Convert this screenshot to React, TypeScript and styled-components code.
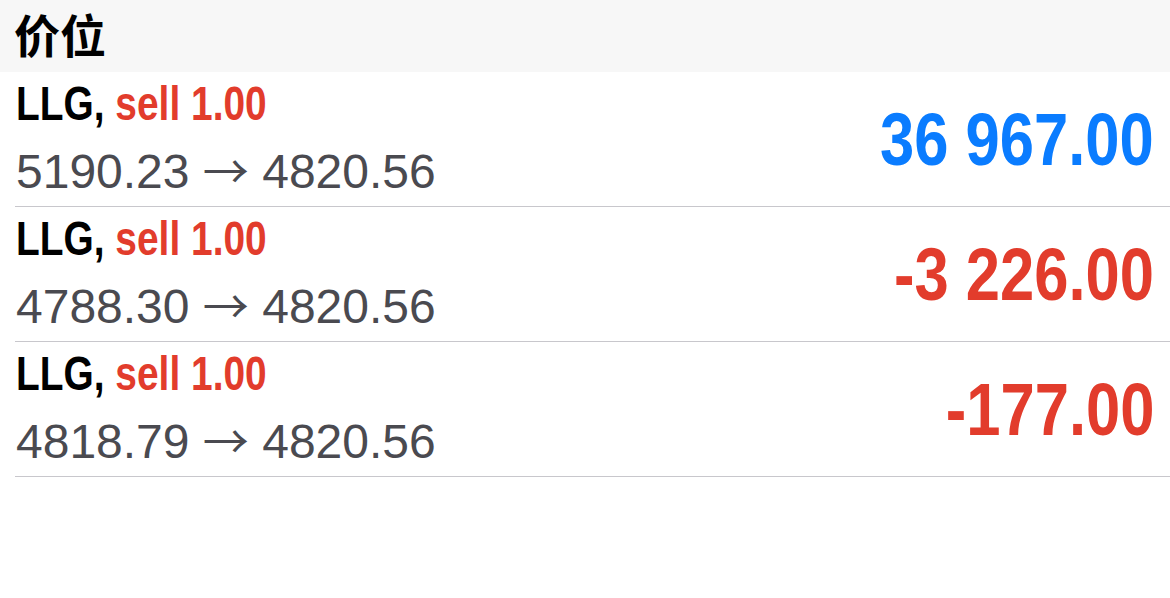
import React from "react";
import styled, { createGlobalStyle } from "styled-components";

const Global = createGlobalStyle`
  html, body { margin: 0; padding: 0; background: #ffffff; }
  body { font-family: "Liberation Sans", Arial, sans-serif; }
`;

const Page = styled.div`
  width: 1170px;
  height: 598px;
  background: #ffffff;
`;

const Header = styled.div`
  height: 72px;
  box-sizing: border-box;
  background: #f7f7f7;
  display: flex;
  align-items: center;
  padding: 0 0 6px 14px;
  font-family: "Noto Sans CJK SC", "Liberation Sans", sans-serif;
  font-weight: 700;
  font-size: 46px;
  line-height: 1;
  color: #000;
`;

const List = styled.div`
  display: flex;
  flex-direction: column;
`;

const Row = styled.div`
  height: 135px;
  box-sizing: border-box;
  display: flex;
  align-items: center;
  justify-content: space-between;
  margin-left: 15px;
  padding-right: 16px;
  border-bottom: 1px solid #c8c7cc;
`;

const Info = styled.div`
  display: flex;
  flex-direction: column;
  padding-top: 2px;
  padding-bottom: 4px;
  margin-left: 1px;
`;

const Title = styled.div`
  font-family: "Liberation Sans", Arial, sans-serif;
  font-weight: 700;
  font-size: 48px;
  line-height: 64px;
  color: #000;
  white-space: nowrap;
  transform: scaleX(0.81);
  transform-origin: left center;
`;

const Side = styled.span`
  color: #e23c2c;
`;

const Prices = styled.div`
  font-family: "Liberation Sans", Arial, sans-serif;
  font-size: 48px;
  line-height: 64px;
  color: #4a4a50;
  white-space: nowrap;
`;

const Arrow = styled.span`
  font-family: "Noto Sans CJK SC", "DejaVu Sans", sans-serif;
  font-size: 46px;
`;

const Profit = styled.div<{ $positive: boolean }>`
  font-family: "Liberation Sans", Arial, sans-serif;
  font-weight: 700;
  font-size: 75px;
  line-height: 80px;
  color: ${(p) => (p.$positive ? "#0a7cff" : "#e23c2c")};
  white-space: nowrap;
  transform: scaleX(0.82);
  transform-origin: right center;
`;

const trades = [
  { open: "5190.23", close: "4820.56", profit: "36 967.00", positive: true },
  { open: "4788.30", close: "4820.56", profit: "-3 226.00", positive: false },
  { open: "4818.79", close: "4820.56", profit: "-177.00", positive: false },
];

export default function App() {
  return (
    <Page>
      <Global />
      <Header>价位</Header>
      <List>
        {trades.map((t, i) => (
          <Row key={i}>
            <Info>
              <Title>
                LLG, <Side>sell 1.00</Side>
              </Title>
              <Prices>
                {t.open} <Arrow>→</Arrow> {t.close}
              </Prices>
            </Info>
            <Profit $positive={t.positive}>{t.profit}</Profit>
          </Row>
        ))}
      </List>
    </Page>
  );
}
